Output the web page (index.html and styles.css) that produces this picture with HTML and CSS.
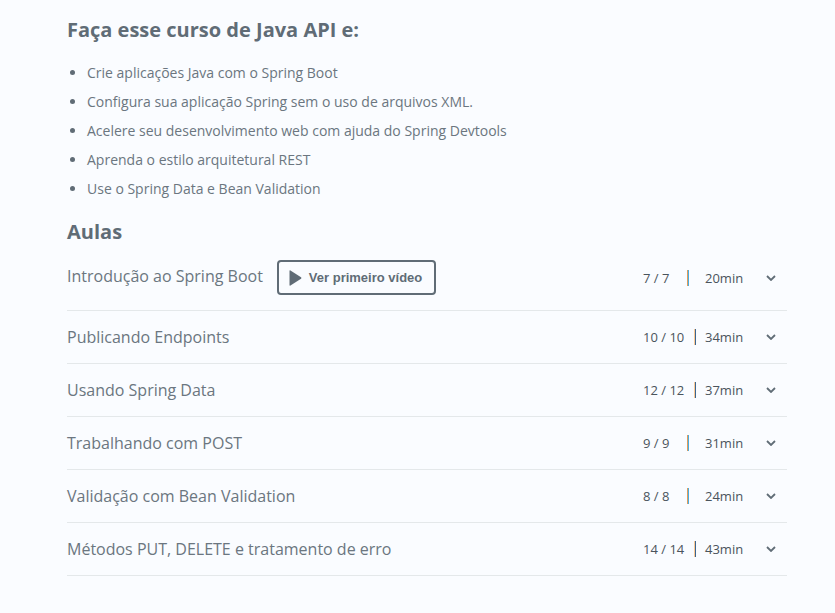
FILE: index.html
```html
<!DOCTYPE html>
<html lang="pt-BR">
<head>
<meta charset="utf-8">
<meta name="viewport" content="width=device-width, initial-scale=1">
<title>Curso de Java API</title>
<link rel="stylesheet" href="styles.css">
</head>
<body>
<svg class="sprite" aria-hidden="true">
  <symbol id="chevron" viewBox="0 0 10 6"><path d="M1 1l4 4 4-4" fill="none" stroke="currentColor" stroke-width="1.8"/></symbol>
</svg>
<main class="course">
  <section>
    <h2 class="title">Faça esse curso de Java API e:</h2>
    <ul class="goals">
      <li>Crie aplicações Java com o Spring Boot</li>
      <li>Configura sua aplicação Spring sem o uso de arquivos XML.</li>
      <li>Acelere seu desenvolvimento web com ajuda do Spring Devtools</li>
      <li>Aprenda o estilo arquitetural REST</li>
      <li>Use o Spring Data e Bean Validation</li>
    </ul>
  </section>
  <section>
    <h2 class="title">Aulas</h2>
    <ul class="lessons">
      <li class="lesson lesson-first">
        <span class="name">Introdução ao Spring Boot</span>
        <button class="video" type="button"><svg class="play" viewBox="0 0 12 16" aria-hidden="true"><path d="M0 1Q0 0 1 .5L11.5 7.300Q12.500 8 11.500 8.700L1 15.500Q0 16 0 15z" fill="currentColor"/></svg>Ver primeiro vídeo</button>
        <span class="meta"><span class="count">7 / 7</span><span class="bar"></span><span class="time">20min</span></span>
        <button class="toggle" type="button" aria-label="Abrir Introdução ao Spring Boot"><svg class="chevron"><use href="#chevron"/></svg></button>
      </li>
      <li class="lesson">
        <span class="name">Publicando Endpoints</span>
        <span class="meta"><span class="count">10 / 10</span><span class="bar bar-long"></span><span class="time">34min</span></span>
        <button class="toggle" type="button" aria-label="Abrir Publicando Endpoints"><svg class="chevron"><use href="#chevron"/></svg></button>
      </li>
      <li class="lesson">
        <span class="name">Usando Spring Data</span>
        <span class="meta"><span class="count">12 / 12</span><span class="bar bar-long"></span><span class="time">37min</span></span>
        <button class="toggle" type="button" aria-label="Abrir Usando Spring Data"><svg class="chevron"><use href="#chevron"/></svg></button>
      </li>
      <li class="lesson">
        <span class="name">Trabalhando com POST</span>
        <span class="meta"><span class="count">9 / 9</span><span class="bar"></span><span class="time">31min</span></span>
        <button class="toggle" type="button" aria-label="Abrir Trabalhando com POST"><svg class="chevron"><use href="#chevron"/></svg></button>
      </li>
      <li class="lesson">
        <span class="name">Validação com Bean Validation</span>
        <span class="meta"><span class="count">8 / 8</span><span class="bar"></span><span class="time">24min</span></span>
        <button class="toggle" type="button" aria-label="Abrir Validação com Bean Validation"><svg class="chevron"><use href="#chevron"/></svg></button>
      </li>
      <li class="lesson">
        <span class="name">Métodos PUT, DELETE e tratamento de erro</span>
        <span class="meta"><span class="count">14 / 14</span><span class="bar bar-long"></span><span class="time">43min</span></span>
        <button class="toggle" type="button" aria-label="Abrir Métodos PUT, DELETE e tratamento de erro"><svg class="chevron"><use href="#chevron"/></svg></button>
      </li>
    </ul>
  </section>
</main>
</body>
</html>
```
FILE: styles.css
```css
* {
  box-sizing: border-box;
}

body {
  margin: 0;
  background: #fafcff;
  color: #606c76;
  font-family: "Open Sans", sans-serif;
}

.sprite {
  display: none;
}

.course {
  padding: 16px 48px 32px 67px;
}

.title {
  margin: 0;
  font-size: 20px;
  line-height: 28px;
  font-weight: 700;
}

.goals {
  margin: 14px 0 15px;
  padding-left: 20px;
  color: #6b7680;
  font-size: 14px;
  line-height: 29px;
}

.goals li::marker {
  color: #606c76;
}

.lessons {
  margin: 0;
  padding: 0;
  list-style: none;
}

.lesson {
  display: flex;
  align-items: center;
  min-height: 53px;
  border-bottom: 1px solid #e4e8ea;
}

.lesson-first {
  min-height: 0;
  padding: 14px 0 15px;
}

.name {
  color: #6b7680;
  font-size: 16px;
}

.lesson-first .name {
  padding-bottom: 4px;
}

.video {
  display: flex;
  align-items: center;
  gap: 7px;
  height: 35px;
  margin-left: 14px;
  padding: 0 12px 0 10px;
  border: 2px solid #606c76;
  border-radius: 4px;
  background: transparent;
  color: inherit;
  font: 700 13px "Liberation Sans", Arial, sans-serif;
}

.play {
  width: 13px;
  height: 16px;
}

.meta {
  display: grid;
  grid-template-columns: 44px 18px 38px;
  align-items: center;
  margin-left: auto;
  color: #4a545c;
  font-size: 13px;
  white-space: nowrap;
}

.bar {
  width: 2px;
  height: 16px;
  border-left: 1px solid #df9c5c;
  background: #4bade0;
}

.bar-long {
  margin-left: 7px;
  border-color: #fbc995;
  background: #3c6690;
}

.toggle {
  display: flex;
  margin-left: 18px;
  padding: 5px 11px 5px 5px;
  border: 0;
  background: transparent;
  color: #606c76;
}

.chevron {
  width: 10px;
  height: 6px;
}
```
